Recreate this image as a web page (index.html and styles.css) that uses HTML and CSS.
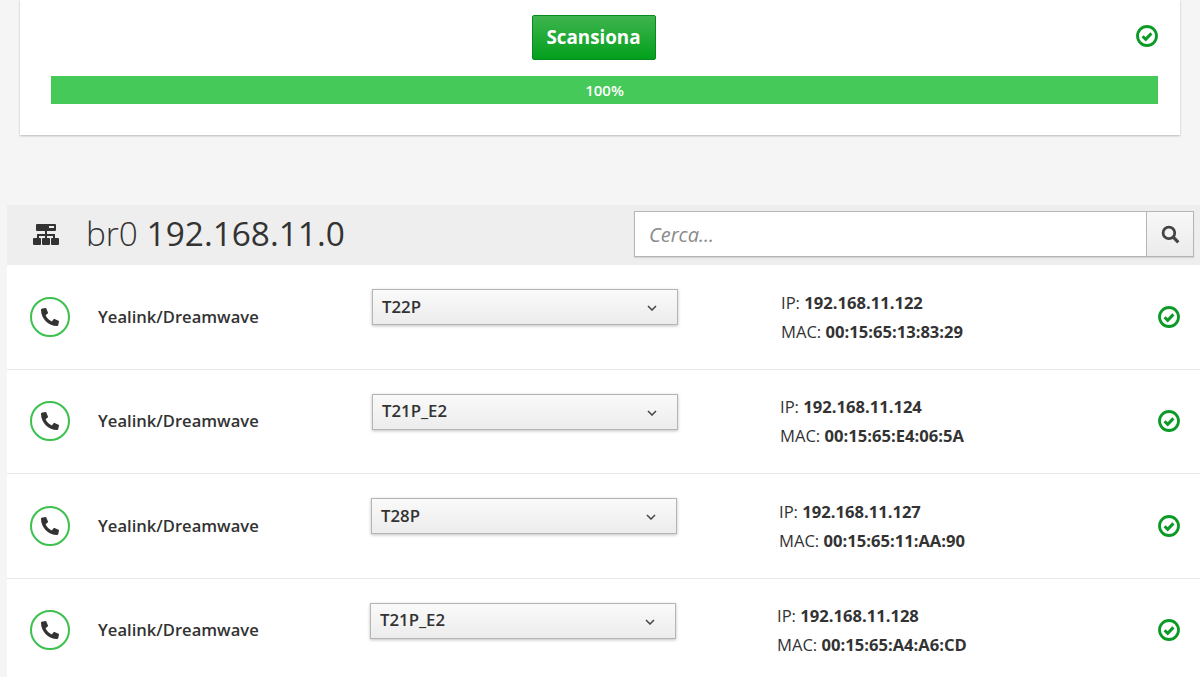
FILE: index.html
```html
<!DOCTYPE html>
<html lang="it">
<head>
  <meta charset="UTF-8" />
  <title>Scansione</title>
  <link rel="stylesheet" href="styles.css">
</head>
<body>

  <svg class="defs" width="0" height="0">
    <symbol id="check" viewBox="0 0 22 22">
      <circle cx="11" cy="11" r="9.5" fill="none" stroke="currentColor" stroke-width="2.8" />
      <path d="M6.6 11.2l3.1 3.1 5.7-5.9" fill="none" stroke="currentColor" stroke-width="3" />
    </symbol>
    <symbol id="phone" viewBox="0 0 512 512">
      <path transform="translate(512 0) scale(-1 1)" d="M493.4 24.6l-104-24c-11.3-2.6-22.9 3.3-27.5 13.9l-48 112c-4.2 9.8-1.4 21.3 6.9 28l60.6 49.6c-36 76.7-98.9 140.5-177.2 177.2l-49.6-60.6c-6.8-8.3-18.2-11.1-28-6.9l-112 48C3.9 366.5-2 378.1.6 389.4l24 104C27.1 504.2 36.7 512 48 512c256.1 0 464-207.5 464-464 0-11.2-7.7-20.9-18.6-23.4z" />
    </symbol>
    <symbol id="chevron" viewBox="0 0 10 6">
      <path d="M1 1l4 4 4-4" fill="none" stroke="currentColor" stroke-width="1.5" />
    </symbol>
  </svg>

  <section class="scan-card">
    <div class="scan-top">
      <button class="scan-btn">Scansiona</button>
      <svg class="check"><use href="#check" /></svg>
    </div>
    <div class="progress">100%</div>
  </section>

  <section class="panel">
    <header class="panel-head">
      <svg class="net-icon" viewBox="0 0 26 22">
        <path d="M4 1h18a1 1 0 0 1 1 1v5a1 1 0 0 1-1 1H4a1 1 0 0 1-1-1V2a1 1 0 0 1 1-1z" />
        <path d="M12 8h2v3h8v4h-2v-2h-6v2h-2v-2H6v2H4v-4h8z" />
        <rect x="0" y="15" width="8" height="7" rx="1" />
        <rect x="9" y="15" width="8" height="7" rx="1" />
        <rect x="18" y="15" width="8" height="7" rx="1" />
        <rect x="16" y="3" width="5" height="2" fill="#eee" />
      </svg>
      <h2 class="panel-title"><span class="iface">br0</span> 192.168.11.0</h2>
      <form class="search">
        <input class="search-input" type="text" placeholder="Cerca..." />
        <button class="search-btn" type="button">
          <svg viewBox="0 0 18 18" width="19" height="19">
            <circle cx="7.5" cy="7.5" r="5.5" fill="none" stroke="currentColor" stroke-width="2.6" />
            <path d="M11.6 11.6l4.8 4.8" fill="none" stroke="currentColor" stroke-width="3" />
          </svg>
        </button>
      </form>
    </header>

    <div class="row">
      <span class="phone"><svg><use href="#phone" /></svg></span>
      <span class="brand">Yealink/Dreamwave</span>
      <div class="select">T22P <svg class="chevron"><use href="#chevron" /></svg></div>
      <div class="info">
        <p>IP: <b>192.168.11.122</b></p>
        <p>MAC: <b>00:15:65:13:83:29</b></p>
      </div>
      <svg class="check"><use href="#check" /></svg>
    </div>

    <div class="row shift-1">
      <span class="phone"><svg><use href="#phone" /></svg></span>
      <span class="brand">Yealink/Dreamwave</span>
      <div class="select">T21P_E2 <svg class="chevron"><use href="#chevron" /></svg></div>
      <div class="info">
        <p>IP: <b>192.168.11.124</b></p>
        <p>MAC: <b>00:15:65:E4:06:5A</b></p>
      </div>
      <svg class="check"><use href="#check" /></svg>
    </div>

    <div class="row shift-2">
      <span class="phone"><svg><use href="#phone" /></svg></span>
      <span class="brand">Yealink/Dreamwave</span>
      <div class="select">T28P <svg class="chevron"><use href="#chevron" /></svg></div>
      <div class="info">
        <p>IP: <b>192.168.11.127</b></p>
        <p>MAC: <b>00:15:65:11:AA:90</b></p>
      </div>
      <svg class="check"><use href="#check" /></svg>
    </div>

    <div class="row shift-3">
      <span class="phone"><svg><use href="#phone" /></svg></span>
      <span class="brand">Yealink/Dreamwave</span>
      <div class="select">T21P_E2 <svg class="chevron"><use href="#chevron" /></svg></div>
      <div class="info">
        <p>IP: <b>192.168.11.128</b></p>
        <p>MAC: <b>00:15:65:A4:A6:CD</b></p>
      </div>
      <svg class="check"><use href="#check" /></svg>
    </div>
  </section>

</body>
</html>
```

FILE: styles.css
```css
html, body {
  height: 677px;
  overflow: hidden;
}
body {
  margin: 0;
  background: #f5f5f5;
  color: #333;
  font-family: "Open Sans", "Noto Sans", sans-serif;
}
.defs {
  position: absolute;
}
.check {
  width: 22px;
  height: 22px;
  color: #0b9a26;
}

/* scan card */
.scan-card {
  margin: 0 20px;
  height: 135px;
  box-sizing: border-box;
  padding: 15px 22px 0 31px;
  background: #fff;
  box-shadow: 0 1px 2px rgba(0,0,0,0.25);
}
.scan-top {
  position: relative;
  display: flex;
  justify-content: center;
  padding-right: 22px;
  height: 45px;
}
.scan-top .check {
  position: absolute;
  right: 0;
  top: 10px;
}
.scan-btn {
  width: 124px;
  height: 45px;
  padding: 0 0 1px;
  border: 1px solid #07891f;
  border-radius: 2px;
  background: linear-gradient(#3fb44f, #02a01c);
  color: #fff;
  font-family: inherit;
  font-size: 18.8px;
  font-weight: 700;
}
.progress {
  margin-top: 16px;
  height: 28px;
  line-height: 28px;
  background: #45c958;
  color: #fff;
  font-size: 15px;
  font-weight: 600;
  text-align: center;
}

/* network panel */
.panel {
  margin: 70px 0 0 7px;
  background: #fff;
}
.panel-head {
  display: flex;
  align-items: center;
  height: 60px;
  padding: 0 6px 2px 26px;
  box-sizing: border-box;
  background: #eee;
}
.net-icon {
  width: 26px;
  height: 22px;
  margin-right: 27px;
  fill: #333;
}
.panel-title {
  flex: 1;
  margin: 0 0 3px;
  font-size: 33.4px;
  font-weight: 400;
  white-space: nowrap;
}
.iface {
  font-weight: 300;
}
.search {
  display: flex;
  width: 560px;
  height: 46px;
  box-sizing: border-box;
  border: 1px solid #b5b5b5;
  background: #fff;
  box-shadow: 0 1px 1px rgba(0,0,0,0.1);
}
.search-input {
  flex: 1;
  min-width: 0;
  padding: 0 14px;
  border: 0;
  outline: 0;
  font-family: inherit;
  font-size: 20px;
  font-style: italic;
}
.search-input::placeholder {
  color: #8a8a8a;
}
.search-btn {
  display: flex;
  align-items: center;
  justify-content: center;
  width: 47px;
  padding: 0;
  border: 0;
  border-left: 1px solid #b5b5b5;
  background: linear-gradient(#f8f8f8, #ebebeb);
  color: #444;
}

/* rows */
.row {
  --shift: 0px;
  --info-shift: 0px;
  display: grid;
  grid-template-columns: 40px 302px 409px 1fr 22px;
  align-items: center;
  height: 104.5px;
  box-sizing: border-box;
  padding: 0 20px 0 23px;
  border-bottom: 1px solid #e8e8e8;
}
.row.shift-1 { --shift: 0px; --info-shift: -1px; }
.row.shift-2 { --shift: -1px; --info-shift: -2px; }
.row.shift-3 { --shift: -2px; --info-shift: -4px; }
.phone {
  display: flex;
  align-items: center;
  justify-content: center;
  width: 40px;
  height: 40px;
  box-sizing: border-box;
  border: 2.5px solid #3cc04e;
  border-radius: 50%;
}
.phone svg {
  width: 18px;
  height: 18px;
  fill: #333;
}
.brand {
  padding: 0 0 1px 28px;
  font-size: 16.6px;
  font-weight: 600;
}
.select {
  display: flex;
  align-items: center;
  justify-content: space-between;
  width: 306px;
  height: 36px;
  box-sizing: border-box;
  margin: -19px 0 0 var(--shift);
  padding: 0 20px 2px 9px;
  border: 1px solid #b5b5b5;
  background: linear-gradient(#fafafa, #ececec);
  box-shadow: 0 1px 3px rgba(0,0,0,0.25);
  font-size: 16.8px;
  font-weight: 600;
}
.chevron {
  width: 10px;
  height: 6px;
  margin-top: 4px;
  color: #444;
}
.info {
  margin-left: var(--info-shift);
  font-size: 16.6px;
}
.info p {
  margin: 0;
  line-height: 29px;
}
.info b {
  font-weight: 700;
}
```
